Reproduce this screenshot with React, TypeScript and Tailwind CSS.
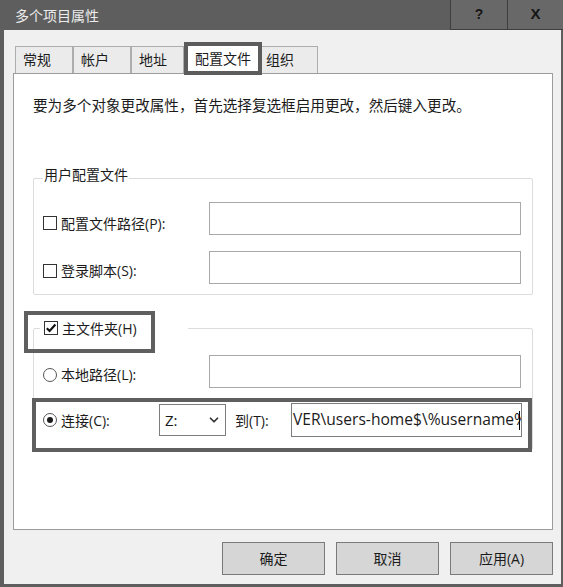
import React from 'react';
import { ChevronDown } from 'lucide-react';

const font = "font-['Open_Sans','Noto_Sans_CJK_SC',sans-serif]";

function Checkbox({ checked }: { checked?: boolean }) {
  return (
    <span className="w-[14px] h-[14px] border border-[#333] bg-white flex items-center justify-center shrink-0">
      {checked && (
        <svg width="12" height="12" viewBox="0 0 12 12">
          <path d="M1.8 6.2 L4.6 9 L10.4 2.6" fill="none" stroke="#111" strokeWidth="2.2" />
        </svg>
      )}
    </span>
  );
}

function Radio({ checked }: { checked?: boolean }) {
  return (
    <span className="w-[14px] h-[14px] rounded-full border border-[#555] bg-white flex items-center justify-center shrink-0">
      {checked && <span className="w-[6px] h-[6px] rounded-full bg-[#1a1a1a]" />}
    </span>
  );
}

function TextBox({ className = '' }: { className?: string }) {
  return <div className={`h-[33px] w-[312px] border border-[#a9a9a9] bg-white ${className}`} />;
}

const tabs = ['常规', '帐户', '地址'];

export default function App() {
  return (
    <div className={`w-[563px] h-[587px] bg-[#5e5e5e] flex flex-col ${font} text-[14px] text-[#1b1b1b]`}>
      {/* title bar */}
      <div className="h-[30px] flex shrink-0">
        <div className="flex-1 pl-[15px] flex items-center text-[#ececec] text-[14px]">多个项目属性</div>
        <div className="w-[57px] bg-[#686868] border-l border-b border-[#3e3e3e] flex items-center justify-center text-[#151515] font-bold text-[14px] font-['Liberation_Sans',sans-serif]">?</div>
        <div className="w-[56px] bg-[#686868] border-l border-b border-[#3e3e3e] flex items-center justify-center text-[#151515] font-bold text-[15px] font-['Liberation_Sans',sans-serif]">X</div>
      </div>

      {/* body */}
      <div className="flex-1 ml-[4px] mr-[2px] mb-[3px] bg-[#f0f0f0] flex flex-col">
        {/* tabs */}
        <div className="flex items-end pl-[11px] pt-[10px] h-[43px] shrink-0">
          {tabs.map((t, i) => (
            <div
              key={t}
              className={`h-[27px] ${i === 2 ? 'w-[53px]' : 'w-[58px]'} bg-[#ebebeb] border border-b-0 border-[#adadad] pl-[7px] pb-[2px] flex items-center`}
            >
              {t}
            </div>
          ))}
          <div className="relative z-10 -mb-[2px] h-[33px] w-[78px] bg-white border-[4px] border-[#5c5c5c] pl-[7px] flex items-center">
            配置文件
          </div>
          <div className="h-[27px] w-[56px] bg-[#ebebeb] border border-b-0 border-l-0 border-[#adadad] pl-[4px] pb-[2px] flex items-center">
            组织
          </div>
        </div>

        {/* panel */}
        <div className="relative mx-[9px] mr-[8px] h-[457px] bg-white border border-[#9c9c9c] flex flex-col">
          <div className="pl-[19px] pt-[21px] text-[14.6px] leading-[20px] whitespace-nowrap">
            要为多个对象更改属性，首先选择复选框启用更改，然后键入更改。
          </div>

          {/* group 1 */}
          <div className="relative ml-[19px] mt-[63px] w-[500px] h-[117px] border border-[#dcdcdc] rounded-[2px] flex flex-col pt-[23px] gap-[16px]">
            <span className="absolute left-[9px] -top-[14px] bg-white px-[1px] leading-[20px]">用户配置文件</span>
            <div className="flex items-center">
              <div className="w-[175px] pl-[9px] pt-[9px] flex items-center gap-[4px]">
                <Checkbox />
                <span>配置文件路径(P):</span>
              </div>
              <TextBox />
            </div>
            <div className="flex items-center">
              <div className="w-[175px] pl-[9px] pt-[6px] flex items-center gap-[4px]">
                <Checkbox />
                <span>登录脚本(S):</span>
              </div>
              <TextBox />
            </div>
          </div>

          {/* group 2 */}
          <div className="relative ml-[19px] mt-[33px] w-[500px] h-[122px] border border-[#dcdcdc] rounded-[2px] flex flex-col pt-[26px] gap-[15px]">
            <div className="absolute left-[6px] -top-[12px] w-[148px] h-[22px] bg-white flex items-center gap-[4px] pl-[4px]">
              <Checkbox checked />
              <span>主文件夹(H)</span>
            </div>
            <div className="flex items-center">
              <div className="w-[175px] pl-[9px] pt-[6px] flex items-center gap-[4px]">
                <Radio />
                <span>本地路径(L):</span>
              </div>
              <TextBox />
            </div>
            <div className="flex items-center">
              <div className="w-[125px] pl-[9px] flex items-center gap-[4px]">
                <Radio checked />
                <span>连接(C):</span>
              </div>
              <div className="w-[67px] h-[32px] border border-[#7d7d7d] bg-white flex items-center justify-between pl-[5px] pr-[4px]">
                <span className="text-[15px]">Z:</span>
                <ChevronDown size={14} strokeWidth={3} className="text-[#333]" />
              </div>
              <span className="ml-[9px] w-[56px]">到(T):</span>
              <div className="h-[34px] w-[231px] border border-[#7d7d7d] bg-white flex items-center overflow-hidden pl-[1px] whitespace-nowrap text-[15.6px]">
                <span className="shrink-0">{'VER\\users-home$\\%username%'}</span>
                <span className="shrink-0 w-px h-[19px] bg-black -ml-[8px]" />
              </div>
            </div>
          </div>

          {/* annotation boxes */}
          <div className="absolute left-[10px] top-[237px] w-[131px] h-[42px] border-[4px] border-[#5f5f5f]" />
          <div className="absolute left-[18px] top-[324px] w-[500px] h-[54px] border-[4px] border-[#5f5f5f]" />
        </div>

        {/* buttons */}
        <div className="flex justify-end gap-[11px] pr-[8px] mt-[12px]">
          {['确定', '取消', '应用(A)'].map((b) => (
            <div key={b} className="w-[103px] h-[33px] bg-[#d6d6d6] border border-[#7a7a7a] flex items-center justify-center">
              {b}
            </div>
          ))}
        </div>
      </div>
    </div>
  );
}
